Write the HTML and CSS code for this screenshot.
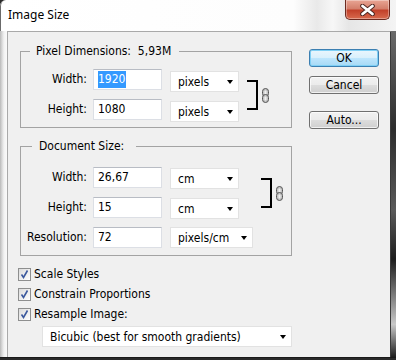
FILE: index.html
```html
<!DOCTYPE html>
<html>
<head>
<meta charset="utf-8">
<link rel="stylesheet" href="styles.css">
</head>
<body>
<div class="window">
  <div class="titlebar">
    <span class="title">Image Size</span>
    <div class="close">
      <svg width="15" height="12" viewBox="0 0 15 12">
        <path d="M2.5 2 L12.5 10 M12.5 2 L2.5 10" stroke="#4a2520" stroke-width="4.6" stroke-linecap="round"/>
        <path d="M2.5 2 L12.5 10 M12.5 2 L2.5 10" stroke="#ffffff" stroke-width="2.8" stroke-linecap="round"/>
      </svg>
    </div>
  </div>
  <div class="frame">
    <div class="leftstrip"></div>
    <div class="client">
      <div class="main">
        <fieldset class="group g1">
          <legend class="legend1">Pixel Dimensions:&nbsp; 5,93M</legend>
          <div class="rowswrap">
            <div class="rows">
              <div class="row">
                <span class="label">Width:</span>
                <div class="input"><span class="hl">1920</span></div>
                <div class="select off2">pixels<span class="arrow"></span></div>
              </div>
              <div class="row">
                <span class="label">Height:</span>
                <div class="input">1080</div>
                <div class="select off2">pixels<span class="arrow"></span></div>
              </div>
            </div>
            <div class="bracket"></div>
            <svg class="chain" width="7" height="15" viewBox="0 0 7 15">
              <rect x="0.5" y="0.5" width="6" height="8" rx="3" fill="#c4c4c4" stroke="#555"/>
              <rect x="2.5" y="2.5" width="2" height="4" rx="1" fill="#f0f0f0"/>
              <rect x="0.5" y="6.5" width="6" height="8" rx="3" fill="#c4c4c4" stroke="#555"/>
              <rect x="2.5" y="8.5" width="2" height="4" rx="1" fill="#f0f0f0"/>
            </svg>
          </div>
        </fieldset>
        <fieldset class="group g2">
          <legend class="legend2">Document Size:</legend>
          <div class="rowswrap">
            <div class="rows">
              <div class="row">
                <span class="label">Width:</span>
                <div class="input">26,67</div>
                <div class="select off1">cm<span class="arrow"></span></div>
              </div>
              <div class="row">
                <span class="label">Height:</span>
                <div class="input">15</div>
                <div class="select off1">cm<span class="arrow"></span></div>
              </div>
              <div class="row">
                <span class="label">Resolution:</span>
                <div class="input">72</div>
                <div class="select wide">pixels/cm<span class="arrow"></span></div>
              </div>
            </div>
            <div class="bracket"></div>
            <svg class="chain" width="7" height="15" viewBox="0 0 7 15">
              <rect x="0.5" y="0.5" width="6" height="8" rx="3" fill="#c4c4c4" stroke="#555"/>
              <rect x="2.5" y="2.5" width="2" height="4" rx="1" fill="#f0f0f0"/>
              <rect x="0.5" y="6.5" width="6" height="8" rx="3" fill="#c4c4c4" stroke="#555"/>
              <rect x="2.5" y="8.5" width="2" height="4" rx="1" fill="#f0f0f0"/>
            </svg>
          </div>
        </fieldset>
        <div class="checks">
          <div class="check"><span class="box"><svg width="11" height="11" viewBox="0 0 11 11"><path d="M2.5 5.5 L4.5 8.5 L8.5 1.5" fill="none" stroke="#3d5a9e" stroke-width="1.6"/></svg></span>Scale Styles</div>
          <div class="check"><span class="box"><svg width="11" height="11" viewBox="0 0 11 11"><path d="M2.5 5.5 L4.5 8.5 L8.5 1.5" fill="none" stroke="#3d5a9e" stroke-width="1.6"/></svg></span>Constrain Proportions</div>
          <div class="check"><span class="box"><svg width="11" height="11" viewBox="0 0 11 11"><path d="M2.5 5.5 L4.5 8.5 L8.5 1.5" fill="none" stroke="#3d5a9e" stroke-width="1.6"/></svg></span>Resample Image:</div>
        </div>
        <div class="select resample">Bicubic (best for smooth gradients)<span class="arrow"></span></div>
      </div>
      <div class="buttons">
        <div class="btn ok">OK</div>
        <div class="btn cancel">Cancel</div>
        <div class="btn auto">Auto...</div>
      </div>
    </div>
    <div class="rightstrip"></div>
  </div>
  <div class="bottomstrip"></div>
</div>
</body>
</html>
```

FILE: styles.css
```css
* { box-sizing: border-box; }
html, body { margin: 0; padding: 0; }
body {
  width: 396px;
  height: 360px;
  overflow: hidden;
  background: #2a2a2a;
  font-family: "DejaVu Sans Condensed", "DejaVu Sans", sans-serif;
  font-size: 12px;
  color: #000;
}
.window {
  width: 396px;
  height: 360px;
  display: flex;
  flex-direction: column;
  background: #f6f6f6;
  border-top-left-radius: 6px;
  overflow: hidden;
}
.titlebar {
  height: 31px;
  flex: none;
  display: flex;
  justify-content: space-between;
  align-items: flex-start;
  background: linear-gradient(to right, #ffffff 0, #fdfdfd 74%, #e9e9e9 80%, #f7f7f7 84%, #e6e6e6 88%, #f4f4f4 100%);
  border-left: 1px solid #6a6a6a;
  border-top-left-radius: 6px;
}
.title {
  font-family: "Noto Sans", "Open Sans", sans-serif;
  font-size: 12px;
  line-height: 16px;
  padding: 7px 0 0 7px;
  color: #000;
}
.close {
  width: 45px;
  height: 20px;
  margin-right: 6px;
  border: 1px solid #6b2a20;
  border-top: none;
  border-radius: 0 0 5px 5px;
  background: linear-gradient(to bottom, #e8a594 0, #d47f6c 45%, #c2412a 55%, #d86a4e 100%);
  display: flex;
  align-items: center;
  justify-content: center;
  box-shadow: inset 0 0 0 1px rgba(255,255,255,0.35);
}
.frame {
  flex: 1;
  display: flex;
}
.leftstrip {
  width: 7px;
  flex: none;
  background: linear-gradient(to right, #b9b9b9 0, #d8d8d8 2px, #f2f2f2 4px, #fafafa 7px);
}
.rightstrip {
  width: 5px;
  flex: none;
  background: linear-gradient(to bottom, #6a6a6a 0, #2c2c2c 30%, #5a5a5a 55%, #1c1c1c 70%, #c8c8c8 90%, #1e1e1e 100%);
}
.bottomstrip {
  height: 3px;
  flex: none;
  background: #2a2a2a;
  border-top: 1px solid #1a1a1a;
}
.client {
  width: 384px;
  flex: none;
  background: #f0f0f0;
  border-top: 1px solid #a9a9a9;
  border-left: 1px solid #a9a9a9;
  border-right: 1px solid #3a3a3a;
  display: flex;
  align-items: flex-start;
}
.main {
  margin-left: 10px;
  width: 274px;
  padding-top: 12px;
}
.group {
  margin: 0 0 0 2px;
  width: 272px;
  border: 1px solid #a3a3a3;
  padding: 11px 0 7px 0;
  min-width: 0;
}
.g2 {
  margin-top: 11px;
  padding-top: 14px;
}
legend {
  line-height: 14px;
  padding: 0;
}
.legend1 { margin-left: 9px; padding: 0 8px 0 6px; }
.legend2 { margin-left: 11px; padding: 0 12px 0 7px; }
.rowswrap {
  display: flex;
  align-items: flex-start;
}
.rows {
  display: flex;
  flex-direction: column;
  gap: 9px;
}
.row {
  display: flex;
  align-items: flex-start;
  height: 21px;
}
.label {
  width: 66px;
  text-align: right;
  line-height: 21px;
  margin-right: 6px;
}
.input {
  width: 69px;
  height: 21px;
  background: #fff;
  border: 1px solid #dcdfe5;
  border-top-color: #b8bcc4;
  padding-left: 4px;
  line-height: 19px;
}
.hl {
  background: #3399ff;
  color: #fff;
  padding: 1px 1px 2px 0;
}
.select {
  position: relative;
  width: 69px;
  height: 21px;
  margin-left: 8px;
  background: #fff;
  border: 1px solid #e2e2e2;
  padding-left: 7px;
  line-height: 20px;
}
.off2 { margin-top: 2px; }
.off1 { margin-top: 1px; }
.wide { width: 83px; }
.arrow {
  position: absolute;
  right: 5px;
  top: 8px;
  width: 0;
  height: 0;
  border-left: 3.5px solid transparent;
  border-right: 3.5px solid transparent;
  border-top: 4px solid #000;
}
.bracket {
  width: 11px;
  height: 30px;
  margin: 11px 0 0 8px;
  border: 2px solid #000;
  border-left: none;
}
.chain {
  margin: 19px 0 0 4px;
  flex: none;
}
.checks {
  margin-top: 8px;
  display: flex;
  flex-direction: column;
}
.check {
  height: 20px;
  display: flex;
  align-items: center;
}
.box {
  width: 13px;
  height: 13px;
  border: 1px solid #8e8f8f;
  background: linear-gradient(135deg, #dcdcdc 0, #f4f4f4 70%, #ffffff 100%);
  margin-right: 3px;
  display: flex;
  align-items: center;
  justify-content: center;
}
.resample {
  width: 250px;
  margin: 2px 0 0 24px;
  padding-left: 7px;
}
.buttons {
  margin-left: 17px;
  padding-top: 17px;
  width: 70px;
  display: flex;
  flex-direction: column;
}
.btn {
  height: 18px;
  border: 1px solid #707070;
  border-radius: 3px;
  background: linear-gradient(to bottom, #f2f2f2 0, #ebebeb 50%, #dddddd 50%, #cfcfcf 100%);
  text-align: center;
  line-height: 16px;
  box-shadow: inset 0 0 0 1px rgba(255,255,255,0.7);
}
.ok {
  border-color: #3c7fb1;
  background: linear-gradient(to bottom, #eaf6fd 0, #d9f0fc 50%, #bee6fd 50%, #a7d9f5 100%);
  box-shadow: inset 0 0 0 1px #7fd0f5;
}
.cancel { margin-top: 9px; }
.auto { margin-top: 17px; }
```
